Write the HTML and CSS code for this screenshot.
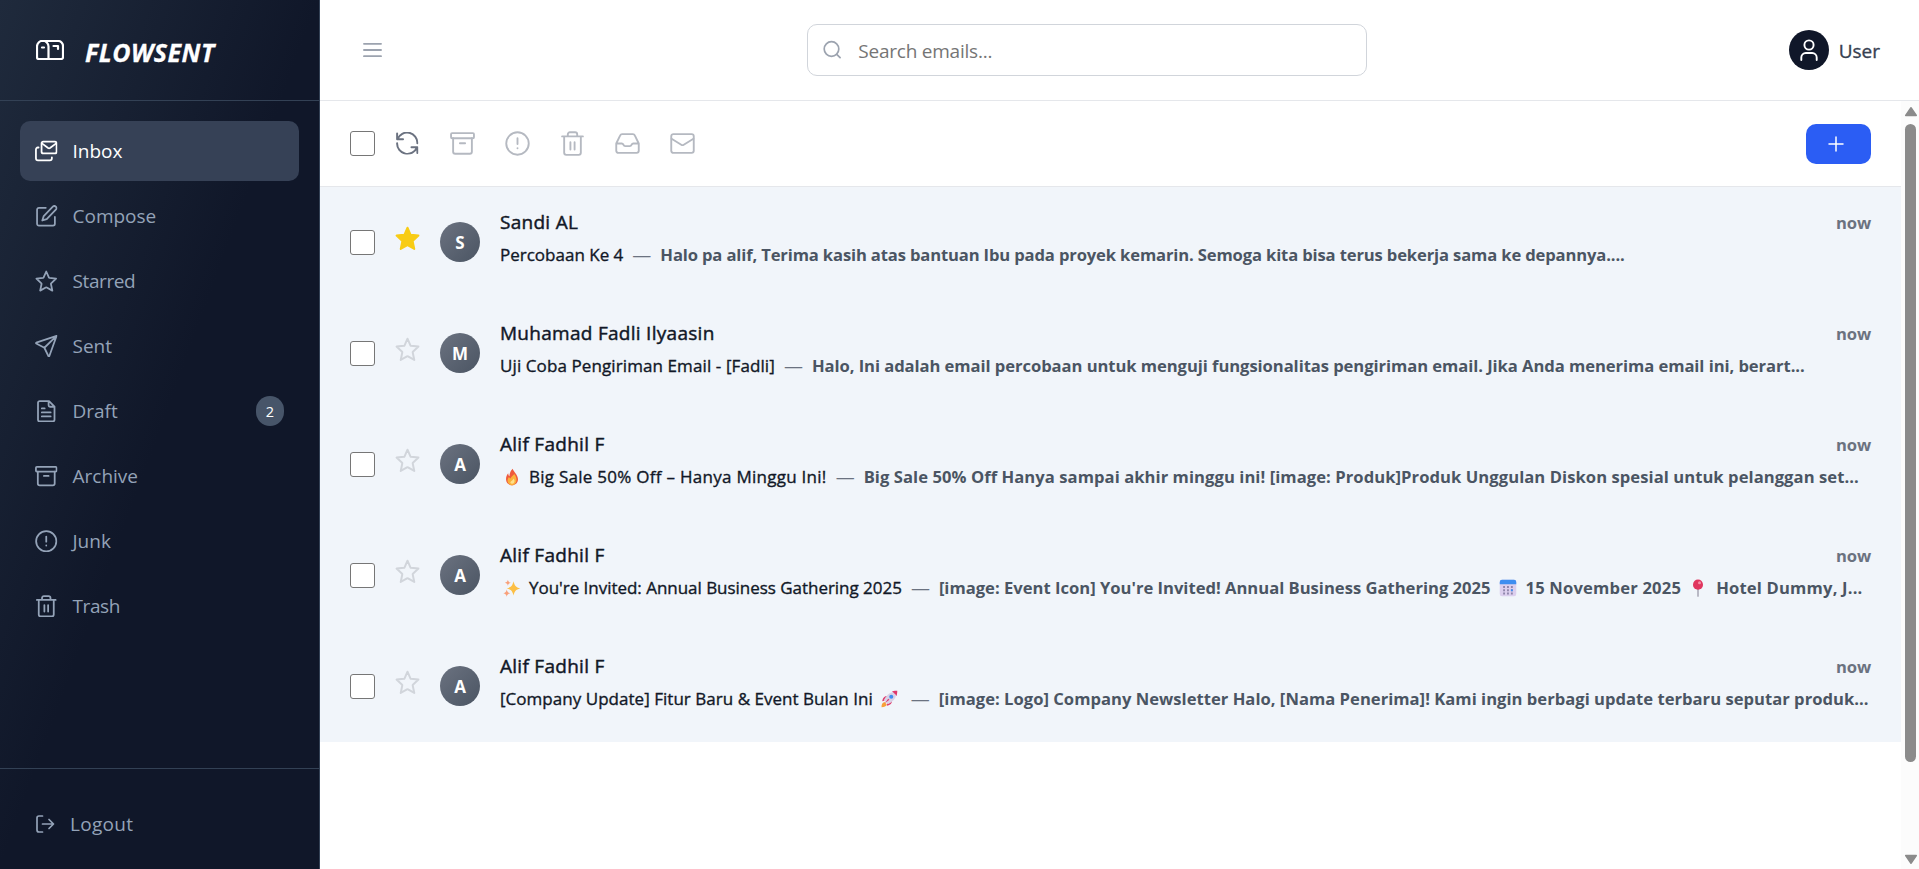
FILE: index.html
```html
<!DOCTYPE html>
<html lang="id">
<head>
<meta charset="utf-8">
<title>Flowsent</title>
<link rel="stylesheet" href="styles.css">
</head>
<body>
<svg class="defs" width="0" height="0">
  <symbol id="i-inboxes" viewBox="0 0 24 24"><rect x="7" y="1.8" width="16" height="12.4" rx="1.8"/><path d="M7.4 3.6l6.6 5a1.8 1.8 0 0 0 2 0l6.6-5M3.8 8H3a2 2 0 0 0-2 2v9.5a2.2 2.2 0 0 0 2.2 2.2h12.6a2.2 2.2 0 0 0 2.2-2.2v-1"/></symbol>
  <symbol id="i-compose" viewBox="0 0 24 24"><path d="M11.5 3H4.200A2 2 0 0 0 2.200 5v15a2 2 0 0 0 2 2h15a2 2 0 0 0 2-2v-7.300M19 1.800a2.120 2.120 0 0 1 3.200 3.200L12.500 15l-4.700 1.500 1.500-4.700z"/></symbol>
  <symbol id="i-star" viewBox="0 0 24 24"><path d="M12 1.600l2.900 6.600c.1.200.2.300.4.300l7.200.7-5.300 5c-.2.200-.3.400-.2.700l1.500 7.100-6-3.400a1 1 0 0 0-1 0l-6 3.400L7 14.900c.1-.300 0-.500-.2-.700l-5.300-5 7.200-.7c.2 0 .3-.1.400-.3z"/></symbol>
  <symbol id="i-send" viewBox="0 0 24 24"><path d="M23 1L1.300 8.200a.5.500 0 0 0 0 .9l8.700 4.500 4.300 9a.5.500 0 0 0 .9 0zM23 1L10 13.600"/></symbol>
  <symbol id="i-doc" viewBox="0 0 24 24"><path d="M15 1.200H5A1.800 1.800 0 0 0 3.200 3v18A1.800 1.800 0 0 0 5 22.800h14a1.800 1.800 0 0 0 1.800-1.800V7zM14.500 1.500v4.200a1.500 1.500 0 0 0 1.500 1.500h4.500M7.300 9h3M7.300 13.200h9.400M7.300 17.500h9.400"/></symbol>
  <symbol id="i-archive" viewBox="0 0 24 24"><rect x="1" y="2" width="22" height="5" rx="1"/><path d="M3 7v12.800a2 2 0 0 0 2 2h14a2 2 0 0 0 2-2V7M9.500 11.700h5"/></symbol>
  <symbol id="i-alert" viewBox="0 0 24 24"><circle cx="12" cy="12" r="10.800"/><path d="M12 7v5.500M12 16.400v.2"/></symbol>
  <symbol id="i-trash" viewBox="0 0 24 24"><path d="M2 5.200h20M4 5.200v15.700a2 2 0 0 0 2 2h12a2 2 0 0 0 2-2V5.200M7.500 5V3.200a2 2 0 0 1 2-2h5a2 2 0 0 1 2 2V5M10 10.700v7M14 10.700v7"/></symbol>
  <symbol id="i-tray" viewBox="0 0 24 24"><path d="M1.200 12L5 4.200a2 2 0 0 1 1.800-1.200h10.400A2 2 0 0 1 19 4.200L22.800 12v7a2 2 0 0 1-2 2H3.200a2 2 0 0 1-2-2zM1.200 12h5.300c.8 0 1.200.4 1.600 1.200.3.800.8 1.300 1.700 1.300h4.400c.9 0 1.400-.5 1.700-1.300.4-.8.800-1.200 1.600-1.200h5.300"/></symbol>
  <symbol id="i-mail" viewBox="0 0 24 24"><rect x="1.200" y="3" width="21.600" height="18" rx="2"/><path d="M1.500 7.500l9.300 5.700a2.300 2.300 0 0 0 2.400 0l9.300-5.700"/></symbol>
  <symbol id="i-refresh" viewBox="0 0 24 24"><path d="M1.200 1.500v6.300h6.300M1.600 7.500A11 11 0 0 1 22.800 12M22.800 22.500v-6.300h-6.300M22.400 16.500A11 11 0 0 1 1.200 12"/></symbol>
</svg>
<div class="app">
  <aside class="sidebar">
    <div class="brand">
      <svg class="logo" viewBox="0 0 28 20"><path d="M6.500 1h15.700A4.800 4.800 0 0 1 27 5.800v11.400A1.800 1.800 0 0 1 25.200 19H2.800A1.800 1.800 0 0 1 1 17.200V6.500a5.500 5.500 0 0 1 11.500 0V19M6 7.500h2M17.500 6h4.500v3"/></svg>
      <span class="brand-name">FLOWSENT</span>
    </div>
    <nav class="nav">
      <a class="item active"><svg class="ic"><use href="#i-inboxes"/></svg><span>Inbox</span></a>
      <a class="item"><svg class="ic"><use href="#i-compose"/></svg><span>Compose</span></a>
      <a class="item"><svg class="ic"><use href="#i-star"/></svg><span class="tight">Starred</span></a>
      <a class="item"><svg class="ic"><use href="#i-send"/></svg><span>Sent</span></a>
      <a class="item"><svg class="ic"><use href="#i-doc"/></svg><span>Draft</span><b class="count">2</b></a>
      <a class="item"><svg class="ic"><use href="#i-archive"/></svg><span>Archive</span></a>
      <a class="item"><svg class="ic"><use href="#i-alert"/></svg><span>Junk</span></a>
      <a class="item"><svg class="ic"><use href="#i-trash"/></svg><span class="tight">Trash</span></a>
    </nav>
    <div class="logout"><svg class="ic-out" viewBox="0 0 20 20"><path d="M7.500 2H4a2 2 0 0 0-2 2v12a2 2 0 0 0 2 2h3.500M7.500 10H18M14 5.500l4.500 4.500-4.500 4.500"/></svg><span>Logout</span></div>
  </aside>
  <div class="main">
    <header class="top">
      <svg class="menu" viewBox="0 0 20 16"><path d="M1 1.500h18M1 8h18M1 14.500h18"/></svg>
      <div class="search"><svg class="ic-search" viewBox="0 0 20 20"><circle cx="9.500" cy="9" r="7.300"/><path d="M14.700 14.300l3.400 3.400"/></svg><span>Search emails...</span></div>
      <div class="user"><div class="user-pic"><svg viewBox="0 0 20 24"><circle cx="10" cy="7" r="4.600"/><path d="M2.300 22v-2.500a4.500 4.500 0 0 1 4.500-4.500h6.400a4.500 4.500 0 0 1 4.500 4.500V22"/></svg></div><span>User</span></div>
    </header>
    <div class="body">
      <div class="content">
        <div class="toolbar">
          <i class="check"></i>
          <svg class="ic refresh"><use href="#i-refresh"/></svg>
          <div class="tools">
            <svg><use href="#i-archive"/></svg>
            <svg><use href="#i-alert"/></svg>
            <svg><use href="#i-trash"/></svg>
            <svg><use href="#i-tray"/></svg>
            <svg><use href="#i-mail"/></svg>
          </div>
          <button class="add"><svg viewBox="0 0 16 16"><path d="M8 1v14M1 8h14"/></svg></button>
        </div>
        <div class="row r1">
          <i class="check"></i><svg class="star on"><use href="#i-star"/></svg><div class="avatar">S</div>
          <div class="text">
            <div class="line1"><span class="from">Sandi AL</span><span class="time">now</span></div>
            <div class="line2"><span class="subject">Percobaan Ke 4</span><span class="dash">—</span><span class="snippet">Halo pa alif, Terima kasih atas bantuan Ibu pada proyek kemarin. Semoga kita bisa terus bekerja sama ke depannya....</span></div>
          </div>
        </div>
        <div class="row r2">
          <i class="check"></i><svg class="star"><use href="#i-star"/></svg><div class="avatar">M</div>
          <div class="text">
            <div class="line1"><span class="from">Muhamad Fadli Ilyaasin</span><span class="time">now</span></div>
            <div class="line2"><span class="subject">Uji Coba Pengiriman Email - [Fadli]</span><span class="dash">—</span><span class="snippet">Halo, Ini adalah email percobaan untuk menguji fungsionalitas pengiriman email. Jika Anda menerima email ini, berart...</span></div>
          </div>
        </div>
        <div class="row r3">
          <i class="check"></i><svg class="star"><use href="#i-star"/></svg><div class="avatar">A</div>
          <div class="text">
            <div class="line1"><span class="from">Alif Fadhil F</span><span class="time">now</span></div>
            <div class="line2"><svg class="emoji lead" viewBox="0 0 24 24"><path fill="#ef5a3c" d="M13 1c1 4 7 8 7 14 0 5-4 8-8 8s-8-3-8-8c0-3 1-6 3-8 0 2 .5 3 1.500 4C9 7 10 3 13 1z"/><path fill="#fbb03b" d="M15 8c2 3 3 5 3 8 0 4-3 7-6 7s-6-3-6-6c0-2 1-4 2-5 .5 1 1 2 2 2 1-3 3-3 5-6z"/><path fill="#ffe08a" d="M14 14c1 1 2 3 1 5-1 2-4 3-5 1s3-3 4-6z"/></svg><span class="subject">Big Sale 50% Off – Hanya Minggu Ini!</span><span class="dash">—</span><span class="snippet">Big Sale 50% Off Hanya sampai akhir minggu ini! [image: Produk]Produk Unggulan Diskon spesial untuk pelanggan set...</span></div>
          </div>
        </div>
        <div class="row r4">
          <i class="check"></i><svg class="star"><use href="#i-star"/></svg><div class="avatar">A</div>
          <div class="text">
            <div class="line1"><span class="from">Alif Fadhil F</span><span class="time">now</span></div>
            <div class="line2"><svg class="emoji lead" viewBox="0 0 24 24"><path fill="#fcbf45" d="M14 3c1.500 6 3 8 9 9.500-6 1.500-7.500 3.500-9 9.500-1.500-6-3-8-9-9.500C11 11 12.500 9 14 3z"/><path fill="#f9a07a" d="M5 14c.8 3 1.500 4 4.500 5-3 .8-3.700 1.800-4.500 4.500C4.200 20.800 3.500 19.800.5 19c3-1 3.700-2 4.500-5zM6.500 1c.6 2.500 1.300 3.400 4 4-2.700.7-3.400 1.500-4 4-.6-2.500-1.300-3.300-4-4 2.700-.6 3.400-1.500 4-4z"/></svg><span class="subject">You're Invited: Annual Business Gathering 2025</span><span class="dash">—</span><span class="snippet">[image: Event Icon] You're Invited! Annual Business Gathering 2025</span><svg class="emoji mid" viewBox="0 0 24 24"><rect x="1" y="1" width="22" height="22" rx="3" fill="#dccfee"/><path fill="#3f8ef0" d="M4 1h16a3 3 0 0 1 3 3v3H1V4a3 3 0 0 1 3-3z"/><path stroke="#8f86ab" stroke-linecap="butt" stroke-width="2.500" stroke-dasharray="2.500 2.700" d="M5.500 10.700h13M5.500 15h13M5.500 19.300h13"/><path fill="#3f8ef0" d="M15.900 13.700h2.500v2.600h-2.500z"/></svg><span class="snippet wide">15 November 2025</span><svg class="emoji mid" viewBox="0 0 24 24"><path stroke="#8d8a9c" stroke-width="1.500" d="M12 13v10"/><circle cx="12" cy="7.500" r="6.700" fill="#e0365f"/><circle cx="14" cy="5" r="2" fill="#f58fa6"/></svg><span class="snippet wide">Hotel Dummy, J...</span></div>
          </div>
        </div>
        <div class="row r5">
          <i class="check"></i><svg class="star"><use href="#i-star"/></svg><div class="avatar">A</div>
          <div class="text">
            <div class="line1"><span class="from">Alif Fadhil F</span><span class="time">now</span></div>
            <div class="line2"><span class="subject">[Company Update] Fitur Baru &amp; Event Bulan Ini</span><svg class="emoji tail" viewBox="0 0 24 24"><path fill="#f7a13a" d="M2 23c0-4 1-6 4-7l3 3c-1 3-3 4-7 4z"/><path fill="#e0386b" d="M10 8c-4 0-6 2-7 7l5-1zM16 14c0 4-2 6-7 7l1-5zM16 2c3-1 5-1 7-1 0 2 0 4-1 7z"/><path fill="#d9d2e6" d="M17 2.500L21.500 7c-1 5-5 9-11 12L5 13.500c3-6 7-10 12-11z"/><circle cx="15" cy="9" r="2.700" fill="#3f8ef0"/><path fill="#e0386b" d="M11 11.500l1.500 1.500L6 18z"/></svg><span class="dash">—</span><span class="snippet">[image: Logo] Company Newsletter Halo, [Nama Penerima]! Kami ingin berbagi update terbaru seputar produk...</span></div>
          </div>
        </div>
      </div>
      <div class="scroll"><svg viewBox="0 0 14 11"><path d="M7 1.800L12.300 9.500H1.700z"/></svg><div class="thumb"></div><svg class="down" viewBox="0 0 14 11"><path d="M7 9.200L12.300 1.500H1.700z"/></svg></div>
    </div>
  </div>
</div>
</body>
</html>
```
FILE: styles.css
```css
* { box-sizing: border-box; }
body { margin: 0; font-family: "Open Sans", "Noto Sans", sans-serif; font-size: 19px; color: #111827; background: #fff; overflow: hidden; }
svg { fill: none; stroke-linecap: round; stroke-linejoin: round; flex: none; display: block; }
.defs { position: absolute; }
.app { display: flex; width: 100%; height: 869px; }
span { white-space: pre; }

.sidebar { width: 320px; flex: none; display: flex; flex-direction: column; background: linear-gradient(to bottom right, #1f2a3c, #101729 50%, #101729); border-right: 1px solid #334155; color: #94a3b8; }
.brand { height: 101px; border-bottom: 1px solid #334155; padding-left: 36px; display: flex; align-items: center; color: #fff; }
.logo { width: 28px; height: 20px; stroke: #fff; stroke-width: 2.200; }
.brand-name { margin-left: 21px; font-weight: 700; font-style: italic; font-size: 25px; letter-spacing: 0.500px; padding-top: 3px; -webkit-text-stroke: 0.300px currentColor; }
.nav { padding: 20px; display: flex; flex-direction: column; gap: 5px; flex: 1; }
.item { height: 60px; border-radius: 10px; padding: 0 15px; display: flex; align-items: center; }
.item.active { background: #364156; color: #fff; }
.ic { width: 22.500px; height: 22.500px; stroke: currentColor; stroke-width: 1.900; }
.item span { margin-left: 15px; padding-top: 0; }
.item .tight { letter-spacing: -0.400px; }
.item .count { margin-left: auto; width: 28px; height: 30px; border-radius: 14px; background: #475569; color: #fff; font-size: 14.500px; font-weight: 400; display: grid; place-items: center; }
.logout { height: 101px; border-top: 1px solid #334155; padding: 10px 0 0 35px; display: flex; align-items: center; }
.logout span { margin-left: 15px; letter-spacing: 0.300px; }
.ic-out { width: 20px; height: 20px; stroke: currentColor; stroke-width: 1.700; }

.main { flex: 1; min-width: 0; display: flex; flex-direction: column; }
.top { height: 101px; border-bottom: 1px solid #e5e7eb; padding: 0 39px 0 43px; display: flex; align-items: center; justify-content: space-between; }
.menu { width: 19px; height: 16px; stroke: #9ca3af; stroke-width: 1.900; }
.search { width: 560px; height: 52px; border: 1px solid #d1d5db; border-radius: 10px; display: flex; align-items: center; padding-left: 14px; margin-left: 4px; color: #757575; }
.search span { margin-left: 16px; letter-spacing: -0.230px; padding-top: 1px; }
.ic-search { width: 20px; height: 20px; stroke: #9ca3af; stroke-width: 1.700; }
.user { display: flex; align-items: center; color: #374151; -webkit-text-stroke: 0.350px currentColor; }
.user span { margin-left: 10px; padding-top: 1px; }
.user-pic { width: 40px; height: 40px; border-radius: 50%; background: #101729; display: grid; place-items: center; }
.user-pic svg { width: 20px; height: 24px; stroke: #fff; stroke-width: 1.900; }

.body { flex: 1; min-height: 0; display: flex; }
.content { flex: 1; min-width: 0; }
.toolbar { height: 86px; border-bottom: 1px solid #e5e7eb; padding: 0 30px; display: flex; align-items: center; color: #6b7280; }
.check { width: 25px; height: 25px; flex: none; border: 1px solid #767676; border-radius: 3px; background: #fff; }
.refresh { margin-left: 21px; stroke-width: 2.100; }
.tools { display: flex; gap: 30px; margin-left: 31px; }
.tools svg { width: 25px; height: 25px; stroke: #b5b9c1; stroke-width: 1.800; }
.add { margin-left: auto; width: 65px; height: 40px; border: 0; border-radius: 10px; background: #2b5df4; padding: 0 0 0 22px; }
.add svg { width: 16px; height: 16px; stroke: #fff; stroke-width: 1.500; }

.row { height: 111px; background: #f1f5fa; padding: 20px 30px; display: flex; }
.row .check { margin-top: 23px; }
.star { width: 25px; height: 25px; margin: 19px 0 0 20px; stroke: #d1d5db; stroke-width: 1.900; }
.star.on { stroke: #f8cc15; fill: #f8cc15; }
.avatar { width: 40px; height: 40px; flex: none; margin: 15px 0 0 20px; border-radius: 50%; background: linear-gradient(135deg, #6b7280, #4b5563); color: #fff; font-size: 17px; font-weight: 700; display: grid; place-items: center; padding-top: 1px; }
.text { margin-left: 20px; flex: 1; min-width: 0; }
.line1 { height: 33px; display: flex; justify-content: space-between; align-items: baseline; line-height: 30px; }
.from { letter-spacing: 0.280px; -webkit-text-stroke: 0.450px currentColor; }
.time { font-weight: 700; font-size: 16.600px; color: #6b7280; letter-spacing: -0.150px; }
.line2 { height: 30px; display: flex; align-items: center; font-size: 16.600px; line-height: 30px; }
.subject { font-size: 17px; -webkit-text-stroke: 0.350px currentColor; }
.dash { margin: 0 9px; color: #6b7280; font-size: 19px; }
.snippet { font-weight: 700; color: #4b5563; }
.r1 .snippet { letter-spacing: -0.140px; }
.r2 .subject { letter-spacing: 0.100px; }
.r2 .snippet { letter-spacing: -0.060px; }
.r3 .subject { letter-spacing: 0.270px; }
.r3 .snippet { letter-spacing: 0.060px; }
.r4 .subject { letter-spacing: -0.030px; }
.r4 .wide { letter-spacing: 0.180px; }
.r5 .subject { letter-spacing: 0.030px; }
.r5 .snippet { letter-spacing: 0.020px; }
.emoji { width: 18px; height: 18px; }
.lead { margin: 0 8px 0 3px; }
.mid { margin: 0 9px 0 8px; }
.tail { margin: 0 4px 0 7px; }

.scroll { width: 18px; background: #fcfcfc; display: flex; flex-direction: column; align-items: center; padding: 5px 0 4px 3px; }
.scroll svg { width: 14px; height: 11px; fill: #8b8b8b; stroke: #8b8b8b; stroke-width: 1.500; margin-left: -2px; }
.thumb { width: 11px; height: 638px; margin: 7px 2px 0 0; border-radius: 6px; background: #8b8b8b; }
.scroll .down { margin-top: auto; }
```
